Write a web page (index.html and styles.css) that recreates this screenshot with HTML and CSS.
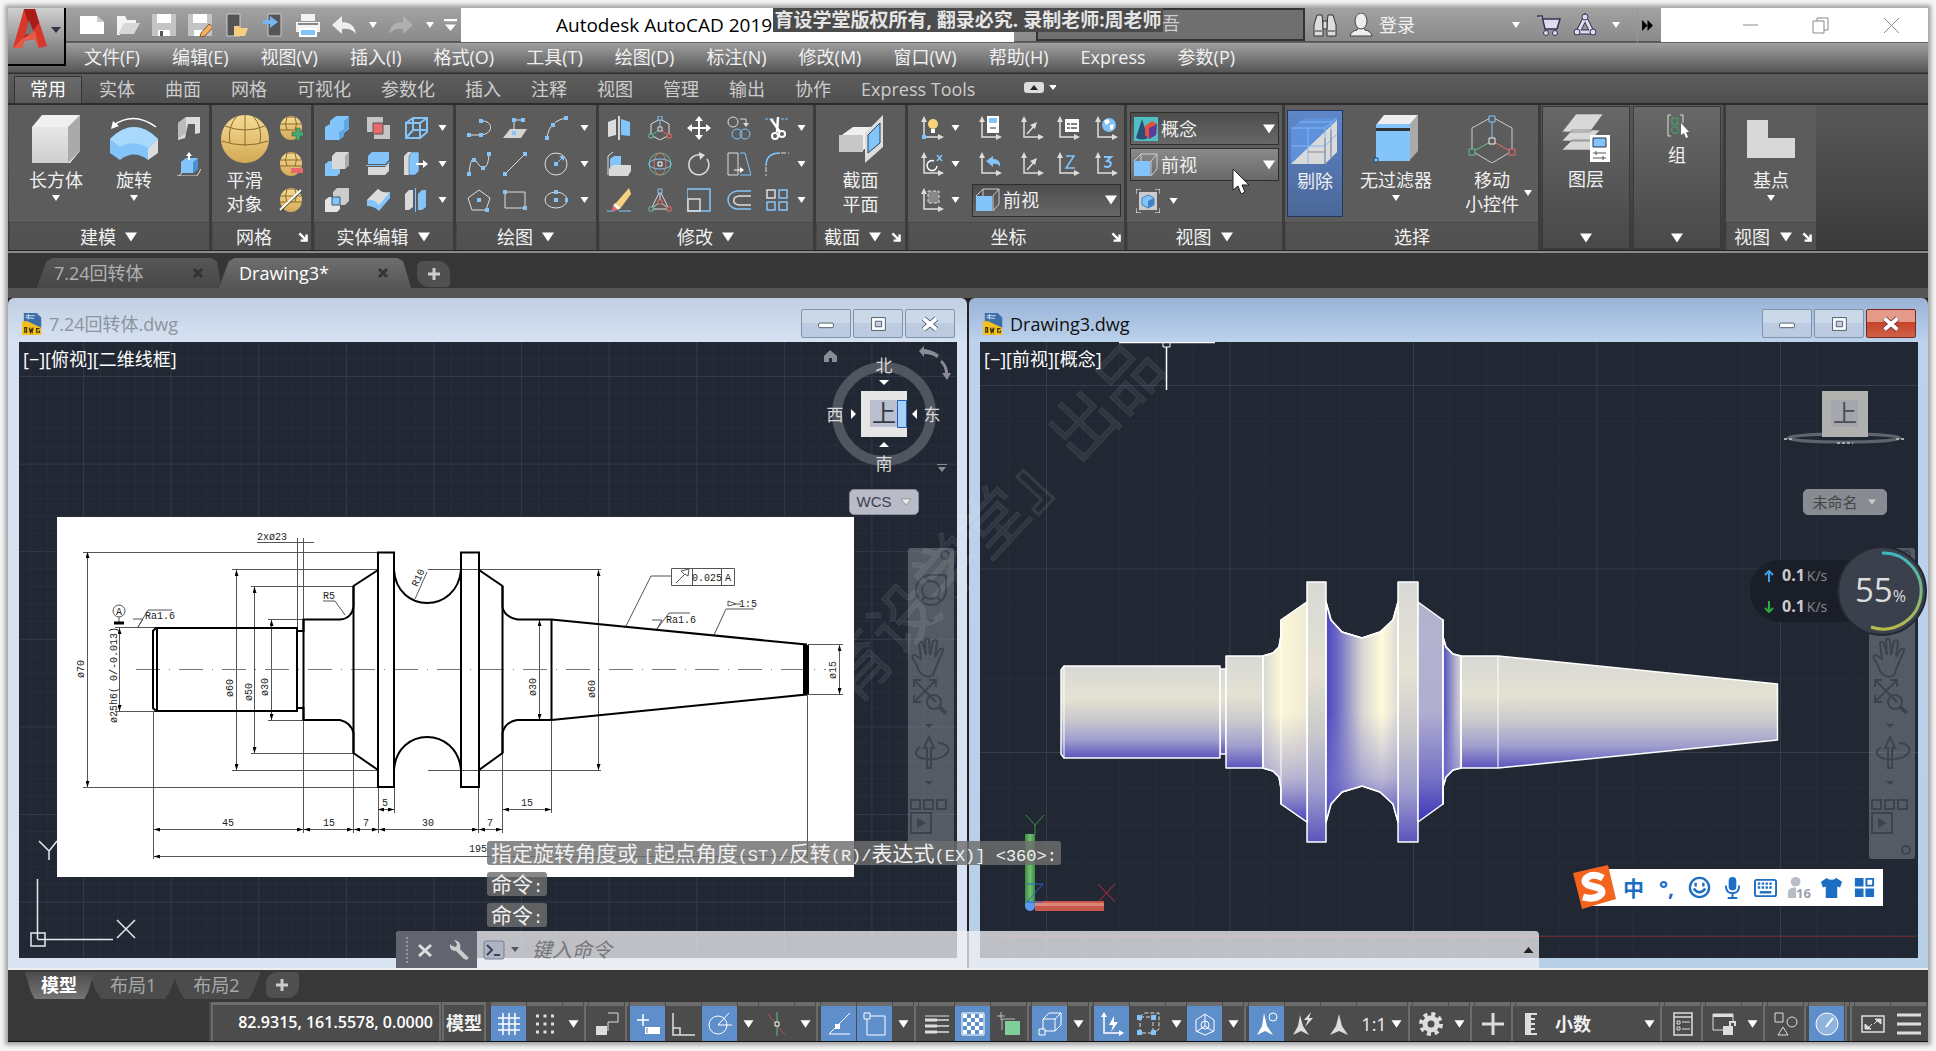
FILE: index.html
```html
<!DOCTYPE html>
<html lang="zh-CN">
<head>
<meta charset="utf-8">
<title>Autodesk AutoCAD 2019</title>
<link rel="stylesheet" href="styles.css">
</head>
<body>
<svg class="sprite" aria-hidden="true">
<defs>
<linearGradient id="gEgg" x1="0" y1="0" x2="0" y2="1"><stop offset="0" stop-color="#f6dc95"/><stop offset="1" stop-color="#d3a956"/></linearGradient>
<linearGradient id="gBox" x1="0" y1="0" x2="0" y2="1"><stop offset="0" stop-color="#e6e6e6"/><stop offset="1" stop-color="#cfcfcf"/></linearGradient>
</defs>
<symbol id="dn" viewBox="0 0 10 8"><path d="M1 1h8L5 7z" fill="#fff"/></symbol>
<symbol id="lnch" viewBox="0 0 10 10"><path d="M2 2l5 5M8 3v5H3" stroke="#fff" stroke-width="2" fill="none"/></symbol>
<symbol id="x" viewBox="0 0 12 12"><path d="M2 2l8 8M10 2l-8 8" stroke="currentColor" stroke-width="3" fill="none"/></symbol>
<symbol id="new" viewBox="0 0 24 24"><path d="M0 3h17l7 6v12H0z" fill="#fff"/><path d="M17 3v6h7" fill="#ccc"/></symbol>
<symbol id="open" viewBox="0 0 24 24"><path d="M1 22V3h8l2 4h9v4H9L4 22z" fill="#f4f4f4"/><path d="M8 10h16l-6 11H2z" fill="#d8d8d8"/></symbol>
<symbol id="save" viewBox="0 0 24 24"><path d="M0 1h24v22H0z" fill="#c4c4c4"/><path d="M5 1h14v9H5zM6 17h12v6H6z" fill="#fff"/><path d="M8 18h3v5H8z" fill="#555"/></symbol>
<symbol id="saveas" viewBox="0 0 24 24"><path d="M0 1h24v22H0z" fill="#c4c4c4"/><path d="M5 1h14v9H5zM6 17h12v6H6z" fill="#fff"/><path d="M13 20l8-9 4 3-8 9-5 1z" fill="#f0b45c" stroke="#8a4a30"/></symbol>
<symbol id="ph1" viewBox="0 0 24 24"><path d="M3 1h13v22H3z" fill="#555" stroke="#ccc"/><path d="M10 13h5l2 2h7l-3 8H10z" fill="#f7cf80"/></symbol>
<symbol id="ph2" viewBox="0 0 24 24"><path d="M8 1h13v22H8z" fill="#555" stroke="#ccc"/><path d="M3 7h7V3l8 6-8 6v-4H3z" fill="#75b7f2"/></symbol>
<symbol id="print" viewBox="0 0 24 24"><path d="M5 1h14v7H5zM0 9h24v10H0z" fill="#f2f2f2"/><path d="M4 16h16v7H4z" fill="#83c5fb" stroke="#fff" stroke-width="2"/><path d="M2 10h20v2H2z" fill="#888"/></symbol>
<symbol id="undo" viewBox="0 0 24 24"><path d="M0 12l10-9v6c8 0 13 4 14 12-3-4-7-6-14-5v5z" fill="currentColor"/></symbol>
<symbol id="redo" viewBox="0 0 24 24"><path d="M24 12L14 3v6C6 9 1 13 0 21c3-4 7-6 14-5v5z" fill="currentColor"/></symbol>
<symbol id="wall" viewBox="0 0 24 24"><path d="M1 7l8-6h14v16l-5 1V8h-7L8 22l-7 2z" fill="#ddd"/><path d="M1 7l8-6v16l-8 6z" fill="#bbb"/></symbol>
<symbol id="pull" viewBox="0 0 24 24"><path d="M0 24h20l4-7M2 24l6-7" stroke="#ddd" fill="none"/><path d="M4 10l5-4h12v11l-5 4H4z" fill="#83c5fb"/><path d="M16 10l5-4v11l-5 4z" fill="#4a90d0"/><path d="M12 8V2" stroke="#fff" stroke-width="2"/><path d="M9 4l3-4 3 4z" fill="#fff"/></symbol>
<symbol id="egg" viewBox="0 0 24 24"><ellipse cx="12" cy="12" rx="11" ry="12" fill="url(#gEgg)"/><path d="M2 8h20M1 14h22M8 1Q5 8 8 14M16 1q3 7 0 13M8 1h8" stroke="#8b6a2a" fill="none"/></symbol>
<symbol id="eggp" viewBox="0 0 24 24"><use href="#egg"/><path d="M17 12h4v4h4v4h-4v4h-4v-4h-4v-4h4z" fill="#3fae6c" stroke="#555" stroke-width=".6"/></symbol>
<symbol id="eggm" viewBox="0 0 24 24"><use href="#egg"/><path d="M12 16h12v5H12z" fill="#e96a6a"/></symbol>
<symbol id="eggs" viewBox="0 0 24 24"><use href="#egg"/><path d="M1 22L22 2" stroke="#fff" stroke-width="2"/><path d="M2 23L23 3" stroke="#444"/></symbol>
<symbol id="uni" viewBox="0 0 24 24"><path d="M0 11l5-3V5l6-5h13v13l-5 4v3l-5 4H0z" fill="#83c5fb"/><path d="M14 24l5-4v-4l5-4V0l-5 5v8l-5 3z" fill="#5da7e6"/></symbol>
<symbol id="sub" viewBox="0 0 24 24"><path d="M0 12l4-3h11v12l-3 3H0z" fill="#83c5fb"/><path d="M7 4l4-4h13v13l-4 4H7z" fill="#d9d9d9"/><path d="M20 4l4-4v13l-4 4z" fill="#aaa"/></symbol>
<symbol id="int" viewBox="0 0 24 24"><path d="M0 12l4-3h11v12l-3 3H0z" fill="#e4e4e4"/><path d="M8 4l4-4h12v13l-4 4H8z" fill="#ccc"/><path d="M7 9h8v8H7z" fill="#83c5fb" stroke="#456"/></symbol>
<symbol id="sects" viewBox="0 0 24 24"><path d="M1 1h16v15H1zM8 9h16v14H8z" fill="#c6c6c6"/><path d="M7 7h10v11H7z" fill="#e96a6a" stroke="#555"/></symbol>
<symbol id="slice" viewBox="0 0 24 24"><path d="M2 4l4-4h17v8l-4 4H2z" fill="#83c5fb"/><path d="M2 15h17l4-4v8l-4 4H2z" fill="#d9d9d9"/><path d="M0 13.500h20l4-4" stroke="#83c5fb" fill="none"/></symbol>
<symbol id="thick" viewBox="0 0 24 24"><path d="M1 12L12 1q5 5 12 3v6L13 23Q8 18 1 18z" fill="#83c5fb"/><path d="M1 12L12 1q5 5 12 3L13 17Q8 11 1 12z" fill="#ddd"/></symbol>
<symbol id="wire" viewBox="0 0 24 24"><path d="M2 7h14v15H2zM2 7l7-5h14l-7 5M23 2v14l-7 6M9 2v12h14M9 14l-7 8" fill="none" stroke="#83c5fb" stroke-width="2"/></symbol>
<symbol id="extr" viewBox="0 0 24 24"><path d="M0 4l4-4h8v19l-4 4H0z" fill="#d9d9d9"/><path d="M5 4l3-4h7v19l-4 4H5z" fill="#83c5fb" stroke="#456" stroke-width=".5"/><path d="M12 12h9" stroke="#fff" stroke-width="2"/><path d="M19 8l5 4-5 4z" fill="#fff"/></symbol>
<symbol id="sep" viewBox="0 0 24 24"><path d="M1 6l4-4h4v17l-4 3H1z" fill="#d9d9d9"/><path d="M14 6l4-4h4v17l-4 3h-4z" fill="#83c5fb"/><path d="M11.500 0v24" stroke="#83c5fb"/></symbol>
<symbol id="mir" viewBox="0 0 24 24"><path d="M1 6l8-3v16l-8 2z" fill="#ddd"/><path d="M14 3l9 3v14l-9-1z" fill="#83c5fb"/><path d="M12 0v24" stroke="#fff" stroke-width="1.500"/></symbol>
<symbol id="pl" viewBox="0 0 24 24"><path d="M2 19h10c15 0 15-14 3-14" fill="none" stroke="#ddd"/><path d="M0 17h4v4H0zM12 17h4v4h-4zM12 3h4v4h-4z" fill="#83c5fb"/></symbol>
<symbol id="pp" viewBox="0 0 24 24"><path d="M0 22l7-9h17l-6 9z" fill="#d4d4d4"/><path d="M11 16V4h8" stroke="#ddd" fill="none"/><path d="M9 15h4v4H9zM9 2h4v4H9zM18 2h4v4h-4z" fill="#83c5fb"/></symbol>
<symbol id="arc" viewBox="0 0 24 24"><path d="M3 22Q5 5 22 2" stroke="#ddd" fill="none" stroke-dasharray="16 2"/><path d="M1 20h4v4H1zM7 7h4v4H7zM20 0h4v4h-4z" fill="#83c5fb"/></symbol>
<symbol id="spl" viewBox="0 0 24 24"><path d="M2 22C4 0 8 8 12 13s9 4 10-10" stroke="#ddd" fill="none"/><path d="M0 20h4v4H0zM5 6h4v4H5zM14 14h4v4h-4zM20 0h4v4h-4z" fill="#83c5fb"/></symbol>
<symbol id="lin" viewBox="0 0 24 24"><path d="M2 22L22 2" stroke="#ddd"/><path d="M0 20h4v4H0zM20 0h4v4h-4z" fill="#83c5fb"/></symbol>
<symbol id="cir" viewBox="0 0 24 24"><circle cx="12" cy="12" r="11" fill="none" stroke="#ddd"/><path d="M12 12l6-6" stroke="#83c5fb"/><path d="M10 10h4v4h-4zM15 4h5v5z" fill="#83c5fb"/></symbol>
<symbol id="pent" viewBox="0 0 24 24"><path d="M12 2l11 8-4 12H5L1 10z" fill="none" stroke="#ddd"/><path d="M10 10h4v4h-4zM18 20h4v4h-4z" fill="#83c5fb"/></symbol>
<symbol id="rect" viewBox="0 0 24 24"><path d="M2 4h20v16H2z" fill="none" stroke="#ddd"/><path d="M0 2h4v4H0zM20 18h4v4h-4z" fill="#83c5fb"/></symbol>
<symbol id="ell" viewBox="0 0 24 24"><ellipse cx="12" cy="12" rx="11" ry="8" fill="none" stroke="#ddd"/><path d="M10 10h4v4h-4zM10 2h4v4h-4zM21 10h4v4h-4z" fill="#83c5fb"/></symbol>
<symbol id="align" viewBox="0 0 24 24"><path d="M1 23V4l5-4" stroke="#ddd" fill="none"/><path d="M3 7l4-3h7v9l-4 3H3z" fill="#83c5fb"/><path d="M2 17l4-4h18v6l-3 5H2z" fill="#d9d9d9"/></symbol>
<symbol id="erase" viewBox="0 0 24 24"><path d="M0 23h7M12 23h12" stroke="#83c5fb"/><path d="M8 16L22 0l2 6L13 21z" fill="#f7cf80"/><path d="M8 15l5 5-2 2-5-4z" fill="#fff"/><path d="M6 17l5 5-4 1-2-2z" fill="#e96a6a"/></symbol>
<symbol id="giz" viewBox="0 0 24 24"><path d="M3 19V8l9-5 9 5v11l-9 5z" fill="none" stroke="#ddd"/><path d="M12 3v10" stroke="#83c5fb"/><path d="M12 13l-9 7" stroke="#5fc08a"/><path d="M12 13l9 7" stroke="#e96a6a"/><path d="M10 0h4v4h-4z" fill="#5c5c5c" stroke="#83c5fb"/><path d="M1 18h4v4H1z" fill="#5c5c5c" stroke="#5fc08a"/><path d="M19 18h4v4h-4z" fill="#5c5c5c" stroke="#e96a6a"/><path d="M10 11h4v4h-4z" fill="#5c5c5c" stroke="#ddd"/></symbol>
<symbol id="rot3" viewBox="0 0 24 24"><circle cx="12" cy="12" r="11" fill="none" stroke="#5fc08a"/><ellipse cx="12" cy="12" rx="6" ry="11" fill="none" stroke="#e96a6a"/><ellipse cx="12" cy="12" rx="11" ry="5" fill="none" stroke="#83c5fb"/><path d="M10 10h4v4h-4z" fill="#5c5c5c" stroke="#fff"/></symbol>
<symbol id="scl3" viewBox="0 0 24 24"><path d="M3 21L12 3l9 18zM12 3v11l-9 7M12 14l9 7" fill="none" stroke="#ddd"/><path d="M10 1h4v4h-4z" fill="#5c5c5c" stroke="#83c5fb"/><path d="M1 19h4v4H1z" fill="#5c5c5c" stroke="#5fc08a"/><path d="M19 19h4v4h-4zM10 12h4v4h-4z" fill="#5c5c5c" stroke="#e96a6a"/></symbol>
<symbol id="move" viewBox="0 0 24 24"><path d="M12 2v20M2 12h20" stroke="#fff" stroke-width="2"/><path d="M12 0l4 5H8zM12 24l-4-5h8zM0 12l5-4v8zM24 12l-5 4V8z" fill="#fff"/></symbol>
<symbol id="rot" viewBox="0 0 24 24"><path d="M14 3A10 10 0 1 0 20 7" fill="none" stroke="#ddd" stroke-width="1.500"/><path d="M12 0l6 3-5 5z" fill="#ddd"/></symbol>
<symbol id="scale" viewBox="0 0 24 24"><path d="M0 23V1h23v22z" fill="none" stroke="#83c5fb" stroke-width="1.500"/><path d="M1 11h12v12H1z" fill="none" stroke="#ddd" stroke-width="1.500"/></symbol>
<symbol id="copy" viewBox="0 0 24 24"><circle cx="6" cy="6" r="5" fill="none" stroke="#ddd"/><circle cx="10" cy="18" r="5" fill="none" stroke="#83c5fb"/><circle cx="18" cy="18" r="5" fill="none" stroke="#83c5fb"/><path d="M13 3h6v6" stroke="#ddd" fill="none"/><path d="M16 7h6l-3 4z" fill="#ddd"/></symbol>
<symbol id="str" viewBox="0 0 24 24"><path d="M1 1h10v22H1z" fill="none" stroke="#ddd"/><path d="M13 1h5l6 22H13" fill="none" stroke="#83c5fb"/><path d="M7 18h9" stroke="#fff"/><path d="M13 15l4 3-4 3z" fill="#fff"/></symbol>
<symbol id="off" viewBox="0 0 24 24"><path d="M24 3H10C-2 5-2 19 10 21h14" fill="none" stroke="#83c5fb" stroke-width="1.500"/><path d="M24 8H12c-7 1-7 8 0 9h12" fill="none" stroke="#ddd" stroke-width="1.500"/></symbol>
<symbol id="trim" viewBox="0 0 24 24"><path d="M0 3h9M16 3h8" stroke="#83c5fb" stroke-dasharray="3 1"/><path d="M6 3l9 13M13 1l-1 15" stroke="#fff" stroke-width="2.500"/><circle cx="10" cy="20" r="3" fill="none" stroke="#fff" stroke-width="2"/><circle cx="17" cy="18" r="3" fill="none" stroke="#fff" stroke-width="2"/></symbol>
<symbol id="fil" viewBox="0 0 24 24"><path d="M1 14C1 5 6 1 15 1" fill="none" stroke="#83c5fb" stroke-width="1.500"/><path d="M1 15v9M16 1h8" stroke="#ddd" stroke-dasharray="5 2"/></symbol>
<symbol id="arr" viewBox="0 0 24 24"><g fill="none" stroke-width="1.500"><path d="M2 2h8v8H2z" stroke="#ddd"/><path d="M14 2h8v8h-8zM2 14h8v8H2zM14 14h8v8h-8z" stroke="#83c5fb"/></g></symbol>
<symbol id="ax" viewBox="0 0 24 24"><path d="M4 4v17h16" fill="none" stroke="#ddd" stroke-width="1.500"/><path d="M1 6l3-6 3 6zM18 18l6 3-6 3z" fill="#ddd"/></symbol>
<symbol id="ax1" viewBox="0 0 24 24"><use href="#ax"/><circle cx="13" cy="8" r="5" fill="#f9d37c"/><path d="M11 13h4v4h-4z" fill="#fff"/><path d="M2 19h4v4H2z" fill="#83c5fb"/></symbol>
<symbol id="ax2" viewBox="0 0 24 24"><use href="#ax"/><path d="M14 9a5 5 0 1 0 3 5" fill="none" stroke="#fff" stroke-width="1.500"/><path d="M17 3l5 6M22 3l-5 6" stroke="#83c5fb" stroke-width="1.500"/></symbol>
<symbol id="ax3" viewBox="0 0 24 24"><use href="#ax"/><path d="M8 3h11v12H8z" fill="#888" stroke="#ddd" stroke-dasharray="3 2"/></symbol>
<symbol id="ax4" viewBox="0 0 24 24"><use href="#ax"/><path d="M9 0h12v17H9z" fill="#fff"/><path d="M11 2h8v5h-8z" fill="#83c5fb"/><path d="M12 12h6" stroke="#333"/></symbol>
<symbol id="ax5" viewBox="0 0 24 24"><use href="#ax"/><path d="M7 18l7-8" stroke="#ddd" stroke-width="1.500"/><path d="M10 9l7-3-2 7z" fill="#ddd"/></symbol>
<symbol id="ax6" viewBox="0 0 24 24"><use href="#ax"/><path d="M9 3h14v13H9z" fill="#fff"/><path d="M11 8h3M15 8h6M11 12h3M15 12h6" stroke="#555" stroke-width="1.500"/></symbol>
<symbol id="ax7" viewBox="0 0 24 24"><use href="#ax"/><circle cx="15" cy="9" r="7" fill="#7fc0f8"/><path d="M10 5l4-2 2 3-4 3zM16 9l4-1-1 5-3 1z" fill="#fff"/></symbol>
<symbol id="ax8" viewBox="0 0 24 24"><use href="#ax"/><path d="M8 9l7-5v3q8 0 7 8-2-4-7-3v3z" fill="#83c5fb"/></symbol>
<symbol id="axz" viewBox="0 0 24 24"><use href="#ax"/><path d="M10 4h8l-8 12h9" stroke="#83c5fb" stroke-width="1.500" fill="none"/></symbol>
<symbol id="ax33" viewBox="0 0 24 24"><use href="#ax"/><path d="M10 5h7l-4 4q6 1 3 5-3 2-6 0" stroke="#83c5fb" stroke-width="2" fill="none"/></symbol>
<symbol id="view" viewBox="0 0 24 24"><path d="M7 1h16v15l-6 7M17 8l6-7M0 8l7-7v7M17 23V8" fill="none" stroke="#ccc"/><path d="M0 8h16v15H0z" fill="#83c5fb"/></symbol>
<symbol id="concept" viewBox="0 0 24 24"><path d="M0 0h24v24H0z" fill="#4fc0c4"/><path d="M8 2l6 19q-6 3-12 0z" fill="#2b4f78"/><path d="M11 9l7-5 5 3-1 11-7 4-4-4z" fill="#e2523c"/><path d="M15 11l8-4-1 11-7 4z" fill="#5b3a9b"/></symbol>
<symbol id="vc" viewBox="0 0 24 24"><path d="M0 5V0h5M19 0h5v5M24 19v5h-5M5 24H0v-5" fill="none" stroke="#fff"/><path d="M3 3h18v18H3z" fill="#ccc"/><path d="M12 6l6 3v7l-6 3-6-3V9z" fill="#83c5fb" stroke="#3d82c4"/><path d="M12 12l6-3v7l-6 3z" fill="#3d82c4"/></symbol>
<symbol id="box" viewBox="0 0 48 48"><path d="M0 12L10 0h38v36L38 48H0z" fill="#f0f0f0"/><path d="M0 12h36v36H0z" fill="url(#gBox)"/><path d="M36 12L48 0v36L36 48z" fill="#aaa"/></symbol>
<symbol id="rev" viewBox="0 0 48 48"><path d="M4 10Q24-4 46 12" fill="none" stroke="#fff" stroke-width="1.500"/><path d="M1 14l2-8 6 5z" fill="#fff"/><path d="M0 24Q24 0 48 24v8L38 45Q24 34 10 45L0 38z" fill="#83c5fb"/><path d="M0 24Q24 0 48 24L38 33Q24 24 10 32z" fill="#a9d8fd"/><path d="M48 24v14l-10 7V34z" fill="#ddd"/></symbol>
<symbol id="bigegg" viewBox="0 0 48 48"><ellipse cx="24" cy="24" rx="24" ry="24" fill="url(#gEgg)"/><path d="M4 11q20 8 40 0M1 26q23 8 46 0M16 1Q6 12 9 28M32 1q10 11 7 27M24 0v31" stroke="#8b6a2a" fill="none"/></symbol>
<symbol id="secp" viewBox="0 0 48 48"><path d="M2 22L16 12h20v15L24 37H2z" fill="#f0f0f0"/><path d="M2 20h24v17H2z" fill="#c8c8c8"/><path d="M28 18L46 0v32L28 48z" fill="#ddd"/><path d="M31 20l12-12v20L31 38z" fill="#83c5fb" stroke="#246"/></symbol>
<symbol id="cull" viewBox="0 0 48 48"><path d="M0 48V12L14 2h32v34L34 48z" fill="#5f90dc"/><path d="M46 4v32L34 48H0z" fill="#dadada"/><path d="M17 12v36M0 30h34M34 12v36M8 6h34M40 8v34M34 30l12-12M0 12h34L46 2" stroke="#7fb8f4" fill="none"/><path d="M34 48V22M17 36h17M40 42V14" stroke="#888"/></symbol>
<symbol id="nof" viewBox="0 0 48 48"><path d="M4 10L12 0h34l-8 10z" fill="#eee"/><path d="M37 10l9-10v36l-9 10z" fill="#aaa"/><path d="M4 9h34v4H4z" fill="#83c5fb"/><path d="M4 13h34v3H4z" fill="#333"/><path d="M4 16h34v30H4z" fill="#83c5fb"/><path d="M2 43h4v4H2z" fill="#83c5fb" stroke="#246"/></symbol>
<symbol id="bgiz" viewBox="0 0 48 48"><path d="M4 36V13L24 2l20 11v23L24 48z" fill="none" stroke="#ccc"/><path d="M24 4v22" stroke="#83c5fb"/><path d="M24 26L4 37" stroke="#5fc08a"/><path d="M24 26l20 11" stroke="#e96a6a"/><g fill="#5c5c5c"><path d="M21 1h6v6h-6z" stroke="#83c5fb"/><path d="M21 23h6v6h-6z" stroke="#eee"/><path d="M1 34h6v6H1z" stroke="#5fc08a"/><path d="M41 34h6v6h-6z" stroke="#e96a6a"/></g></symbol>
<symbol id="layer" viewBox="0 0 48 48"><path d="M0 54l0-18 10-10h28L28 36H0zM0 27l10-11h28L28 27zM0 18L14 0h27L28 18z" fill="none"/><path d="M0 36l10-10h28L28 36zM0 27l10-11h28L28 27zM0 18L14 0h27L28 18z" fill="#d8d8d8" stroke="#666" stroke-width=".6"/><path d="M28 21h20v27H28z" fill="#fff"/><path d="M31 24h13v9H31z" fill="#83c5fb" stroke="#234"/><path d="M31 39h13M31 44h13M34 37v4M41 42v4" stroke="#555"/></symbol>
<symbol id="grp" viewBox="0 0 24 24"><path d="M6 1H3v21h3M15 1h3v8" fill="none" stroke="#ddd"/><path d="M7 4h6v6H7z" fill="none" stroke="#3fae6c"/><circle cx="10" cy="16" r="3.500" fill="none" stroke="#3fae6c"/><path d="M16 9v12l3-2 2 5 2-1-2-5h3z" fill="#fff"/></symbol>
<symbol id="base" viewBox="0 0 48 48"><path d="M0 5h21v18h27v20H0z" fill="#d8d8d8"/></symbol>
<symbol id="dwg" viewBox="0 0 24 24"><path d="M2 0h14l5 5v12H2z" fill="#3d6ea8"/><path d="M4 3h10M7 1v6M4 5l9 1" stroke="#cfe4f8"/><path d="M0 9h6l15 7v8H0z" fill="#f2c020"/><path d="M3 16v5h2v-5zM8 16l1 5 1-3 1 3 1-5M19 17h-3v4h3v-2" stroke="#3a3000" stroke-width="1.300" fill="none"/></symbol>
</svg>

<div class="app">
<header class="top">
  <button class="logo" aria-label="应用程序菜单"><svg width="36" height="44" viewBox="0 0 36 44"><path d="M1 40L12 1h11l12 37-8 2-4-9-11 2-2 7z" fill="#d8382c"/><path d="M12 1h11l4 14-13 16-2-1 5-13z" fill="#a81c1a"/><path d="M17 12l5 13-9 2z" fill="#777"/><path d="M1 40l9-9 13-8 4 17-4-9-11 2-2 7z" fill="#e65a48"/></svg><svg class="dn" viewBox="0 0 10 8"><path d="M0 1h10L5 7z" fill="#334"/></svg></button>
  <div class="toprows">
  <div class="titlebar">
    <div class="qat">
      <button aria-label="新建"><svg><use href="#new"/></svg></button><button aria-label="打开"><svg><use href="#open"/></svg></button><button aria-label="保存"><svg><use href="#save"/></svg></button><button aria-label="另存为"><svg><use href="#saveas"/></svg></button><button aria-label="从移动设备打开"><svg><use href="#ph1"/></svg></button><button aria-label="保存到移动设备"><svg><use href="#ph2"/></svg></button><button aria-label="打印"><svg><use href="#print"/></svg></button><button aria-label="放弃"><svg><use href="#undo"/></svg></button><button class="nar" aria-label="放弃列表"><svg class="dn"><use href="#dn"/></svg></button><button class="dim-btn" aria-label="重做"><svg><use href="#redo"/></svg></button><button class="nar" aria-label="重做列表"><svg class="dn"><use href="#dn"/></svg></button><button class="nar" aria-label="自定义"><svg class="cust" viewBox="0 0 12 12"><path d="M0 0h12v2H0zM1 5h10l-5 6z" fill="#fff"/></svg></button>
    </div>
    <h1 class="title">Autodesk AutoCAD 2019<span class="notice">育设学堂版权所有, 翻录必究. 录制老师:周老师</span></h1>
    <input class="search" aria-label="键入关键字或短语" placeholder="吾">
    <div class="account">
      <button aria-label="搜索"><svg class="i" viewBox="0 0 24 24"><g fill="#ddd" stroke="#333"><path d="M4 2h5l1 9v12H1V12zM15 2h5l3 10v11h-9V11z"/><path d="M10 8h4v8h-4z"/></g><path d="M2 18h7M15 18h7" stroke="#333"/></svg></button>
      <button class="login"><svg class="i" viewBox="0 0 24 24"><g fill="#eee" stroke="#444"><path d="M1 23q1-5 7-6l2-2h4l2 2q6 1 7 6z"/><ellipse cx="12" cy="8" rx="6" ry="8"/></g></svg>登录</button>
      <button class="nar" aria-label="登录选项"><svg class="dn"><use href="#dn"/></svg></button>
      <button aria-label="商店"><svg class="i" viewBox="0 0 24 24"><path d="M0 3h5l3 13h12l3-10H6" fill="#dde" stroke="#335" stroke-width="1.500"/><circle cx="9" cy="20" r="2.500" fill="#dde" stroke="#335"/><circle cx="18" cy="20" r="2.500" fill="#dde" stroke="#335"/></svg></button>
      <button aria-label="应用"><svg class="i" viewBox="0 0 24 24"><path d="M12 5l7 14H5z" fill="none" stroke="#335" stroke-width="5"/><path d="M12 5l7 14H5z" fill="none" stroke="#dde" stroke-width="3"/><g fill="#dde" stroke="#335"><circle cx="12" cy="4" r="3"/><circle cx="4" cy="19" r="3"/><circle cx="20" cy="19" r="3"/></g></svg></button>
      <button class="nar" aria-label="应用列表"><svg class="dn"><use href="#dn"/></svg></button>
      <button class="more" aria-label="更多"><svg class="cust" viewBox="0 0 12 12"><path d="M1 1l5 5-5 5zM6 1l5 5-5 5z" fill="#000"/></svg></button>
    </div>
    <div class="winbtns">
      <button aria-label="最小化"><svg class="i" viewBox="0 0 24 24"><path d="M5 12h15" stroke="#888"/></svg></button><button aria-label="还原"><svg class="i" viewBox="0 0 24 24"><path d="M4 8h11v12H4zM8 8V5h11v12h-4" fill="none" stroke="#888"/></svg></button><button aria-label="关闭"><svg class="i" viewBox="0 0 24 24"><path d="M4 5l15 15M19 5L4 20" stroke="#888"/></svg></button>
    </div>
  </div>
  <nav class="menu"><a href="#">文件(F)</a><a href="#">编辑(E)</a><a href="#">视图(V)</a><a href="#">插入(I)</a><a href="#">格式(O)</a><a href="#">工具(T)</a><a href="#">绘图(D)</a><a href="#">标注(N)</a><a href="#">修改(M)</a><a href="#">窗口(W)</a><a href="#">帮助(H)</a><a href="#">Express</a><a href="#">参数(P)</a></nav>
  </div>
</header>

<nav class="tabs"><a class="on" href="#">常用</a><a href="#">实体</a><a href="#">曲面</a><a href="#">网格</a><a href="#">可视化</a><a href="#">参数化</a><a href="#">插入</a><a href="#">注释</a><a href="#">视图</a><a href="#">管理</a><a href="#">输出</a><a href="#">协作</a><a href="#">Express Tools</a><button aria-label="最小化功能区"><svg width="32" height="12" viewBox="0 0 32 12"><rect width="20" height="11" rx="3" fill="#ddd"/><path d="M6 8l4-5 4 5z" fill="#222"/><path d="M25 3h8l-4 5z" fill="#fff"/></svg></button></nav>

<section class="ribbon">
  <div class="panel p1"><div class="body">
    <button class="big"><svg><use href="#box"/></svg><span>长方体</span><svg class="dn"><use href="#dn"/></svg></button>
    <button class="big"><svg><use href="#rev"/></svg><span>旋转</span><svg class="dn"><use href="#dn"/></svg></button>
    <div class="grid"><button aria-label="多段体"><svg><use href="#wall"/></svg></button><button aria-label="按住并拖动"><svg><use href="#pull"/></svg></button></div>
  </div><footer><span>建模</span><svg class="ft"><use href="#dn"/></svg></footer></div>
  <div class="panel p2"><div class="body">
    <button class="big"><svg><use href="#bigegg"/></svg><span>平滑<br>对象</span></button>
    <div class="grid"><button aria-label="提高平滑度"><svg><use href="#eggp"/></svg></button><button aria-label="降低平滑度"><svg><use href="#eggm"/></svg></button><button aria-label="优化网格"><svg><use href="#eggs"/></svg></button></div>
  </div><footer><span>网格</span><svg class="ln"><use href="#lnch"/></svg></footer></div>
  <div class="panel p3"><div class="body"><div class="grid">
    <button aria-label="并集"><svg><use href="#uni"/></svg></button><button aria-label="干涉"><svg><use href="#sects"/></svg></button><button aria-label="提取边"><svg><use href="#wire"/></svg></button><button class="d" aria-label="更多边工具"><svg><use href="#dn"/></svg></button>
    <button aria-label="差集"><svg><use href="#sub"/></svg></button><button aria-label="剖切"><svg><use href="#slice"/></svg></button><button aria-label="拉伸面"><svg><use href="#extr"/></svg></button><button class="d" aria-label="更多面工具"><svg><use href="#dn"/></svg></button>
    <button aria-label="交集"><svg><use href="#int"/></svg></button><button aria-label="加厚"><svg><use href="#thick"/></svg></button><button aria-label="分割"><svg><use href="#sep"/></svg></button><button class="d" aria-label="更多体工具"><svg><use href="#dn"/></svg></button>
  </div></div><footer><span>实体编辑</span><svg class="ft"><use href="#dn"/></svg></footer></div>
  <div class="panel p4"><div class="body"><div class="grid">
    <button aria-label="多段线"><svg><use href="#pl"/></svg></button><button aria-label="平面"><svg><use href="#pp"/></svg></button><button aria-label="圆弧"><svg><use href="#arc"/></svg></button><button class="d" aria-label="更多圆弧"><svg><use href="#dn"/></svg></button>
    <button aria-label="样条曲线"><svg><use href="#spl"/></svg></button><button aria-label="直线"><svg><use href="#lin"/></svg></button><button aria-label="圆"><svg><use href="#cir"/></svg></button><button class="d" aria-label="更多圆"><svg><use href="#dn"/></svg></button>
    <button aria-label="多边形"><svg><use href="#pent"/></svg></button><button aria-label="矩形"><svg><use href="#rect"/></svg></button><button aria-label="椭圆"><svg><use href="#ell"/></svg></button><button class="d" aria-label="更多椭圆"><svg><use href="#dn"/></svg></button>
  </div></div><footer><span>绘图</span><svg class="ft"><use href="#dn"/></svg></footer></div>
  <div class="panel p5"><div class="body"><div class="grid">
    <button aria-label="三维镜像"><svg><use href="#mir"/></svg></button><button aria-label="三维移动"><svg><use href="#giz"/></svg></button><button aria-label="移动"><svg><use href="#move"/></svg></button><button aria-label="复制"><svg><use href="#copy"/></svg></button><button aria-label="修剪"><svg><use href="#trim"/></svg></button><button class="d" aria-label="更多修剪"><svg><use href="#dn"/></svg></button>
    <button aria-label="三维对齐"><svg><use href="#align"/></svg></button><button aria-label="三维旋转"><svg><use href="#rot3"/></svg></button><button aria-label="旋转"><svg><use href="#rot"/></svg></button><button aria-label="拉伸"><svg><use href="#str"/></svg></button><button aria-label="圆角"><svg><use href="#fil"/></svg></button><button class="d" aria-label="更多圆角"><svg><use href="#dn"/></svg></button>
    <button aria-label="删除"><svg><use href="#erase"/></svg></button><button aria-label="三维缩放"><svg><use href="#scl3"/></svg></button><button aria-label="缩放"><svg><use href="#scale"/></svg></button><button aria-label="偏移"><svg><use href="#off"/></svg></button><button aria-label="阵列"><svg><use href="#arr"/></svg></button><button class="d" aria-label="更多阵列"><svg><use href="#dn"/></svg></button>
  </div></div><footer><span>修改</span><svg class="ft"><use href="#dn"/></svg></footer></div>
  <div class="panel p6"><div class="body">
    <button class="big"><svg><use href="#secp"/></svg><span>截面<br>平面</span></button>
  </div><footer><span>截面</span><svg class="ft"><use href="#dn"/></svg><svg class="ln"><use href="#lnch"/></svg></footer></div>
  <div class="panel p7"><div class="body"><div class="grid">
    <button aria-label="UCS 图标"><svg><use href="#ax1"/></svg></button><button class="d" aria-label="UCS 图标选项"><svg><use href="#dn"/></svg></button><button aria-label="UCS"><svg><use href="#ax4"/></svg></button><button aria-label="世界"><svg><use href="#ax5"/></svg></button><button aria-label="命名 UCS"><svg><use href="#ax6"/></svg></button><button aria-label="UCS 世界"><svg><use href="#ax7"/></svg></button>
    <button aria-label="X 旋转"><svg><use href="#ax2"/></svg></button><button class="d" aria-label="旋转选项"><svg><use href="#dn"/></svg></button><button aria-label="上一个 UCS"><svg><use href="#ax8"/></svg></button><button aria-label="原点"><svg><use href="#ax5"/></svg></button><button aria-label="Z 轴矢量"><svg><use href="#axz"/></svg></button><button aria-label="三点"><svg><use href="#ax33"/></svg></button>
    <button aria-label="视图 UCS"><svg><use href="#ax3"/></svg></button><button class="d" aria-label="视图 UCS 选项"><svg><use href="#dn"/></svg></button><label class="combo"><svg><use href="#view"/></svg><select aria-label="UCS 名称"><option>前视</option></select><svg class="ft"><use href="#dn"/></svg></label>
  </div></div><footer><span>坐标</span><svg class="ln"><use href="#lnch"/></svg></footer></div>
  <div class="panel p8"><div class="body col">
    <label class="combo"><svg><use href="#concept"/></svg><select aria-label="视觉样式"><option>概念</option></select><svg class="ft"><use href="#dn"/></svg></label>
    <label class="combo hot"><svg><use href="#view"/></svg><select aria-label="视图"><option>前视</option></select><svg class="ft"><use href="#dn"/></svg><svg class="cursor" viewBox="0 0 18 27"><path d="M1 1v21l5-4 3 8 4-2-3-7h7z" fill="#fff" stroke="#222"/></svg></label>
    <div class="grid"><button aria-label="视口"><svg><use href="#vc"/></svg></button><button class="d" aria-label="视口选项"><svg><use href="#dn"/></svg></button></div>
  </div><footer><span>视图</span><svg class="ft"><use href="#dn"/></svg></footer></div>
  <div class="panel p9"><div class="body">
    <button class="big on"><svg><use href="#cull"/></svg><span>剔除</span></button>
    <button class="big"><svg><use href="#nof"/></svg><span>无过滤器</span><svg class="dn"><use href="#dn"/></svg></button>
    <button class="big side"><svg><use href="#bgiz"/></svg><span>移动<br>小控件</span><svg class="dn"><use href="#dn"/></svg></button>
  </div><footer><span>选择</span></footer></div>
  <button class="panel fold"><svg><use href="#layer"/></svg><span>图层</span><svg class="ft"><use href="#dn"/></svg></button>
  <button class="panel fold small"><svg><use href="#grp"/></svg><span>组</span><svg class="ft"><use href="#dn"/></svg></button>
  <div class="panel p10"><div class="body">
    <button class="big"><svg><use href="#base"/></svg><span>基点</span><svg class="dn"><use href="#dn"/></svg></button>
  </div><footer><span>视图</span><svg class="ft"><use href="#dn"/></svg><svg class="ln"><use href="#lnch"/></svg></footer></div>
</section>

<nav class="files"><a href="#">7.24回转体<svg><use href="#x"/></svg></a><a class="on" href="#">Drawing3*<svg><use href="#x"/></svg></a><button aria-label="新图形"><svg viewBox="0 0 12 12"><path d="M6 0v12M0 6h12" stroke="#ccc" stroke-width="3"/></svg></button></nav>

<main class="docs">
  <section class="doc">
    <header><svg><use href="#dwg"/></svg><h2>7.24回转体.dwg</h2>
      <button aria-label="最小化"><svg viewBox="0 0 24 24"><rect x="4" y="11" width="16" height="5" rx="1" fill="#fff" stroke="#456"/></svg></button><button aria-label="最大化"><svg viewBox="0 0 24 24"><path d="M5 5h15v14H5zM9 9v6h7V9z" fill="#fff" fill-rule="evenodd" stroke="#456"/></svg></button><button aria-label="关闭"><svg viewBox="0 0 24 24"><path d="M5 6l14 12M19 6L5 18" stroke="#456" stroke-width="6"/><path d="M5 6l14 12M19 6L5 18" stroke="#fff" stroke-width="4"/></svg></button>
    </header>
    <div class="canvas">
      <svg class="draw" viewBox="19 343 938 616" preserveAspectRatio="xMinYMin meet">
        <defs>
          <pattern id="g1" x="83" y="377" width="87.600" height="87.600" patternUnits="userSpaceOnUse"><path d="M17.500 0v88M35 0v88M52.500 0v88M70 0v88M0 17.500h88M0 35h88M0 52.500h88M0 70h88" stroke="#272e3b"/><path d="M.5 0v88M0 .5h88" stroke="#323a49"/></pattern>
          <marker id="ar" viewBox="0 0 6 4" refX="6" refY="2" markerWidth="6" markerHeight="4" markerUnits="userSpaceOnUse" orient="auto-start-reverse"><path d="M0 0l6 2-6 2z"/></marker>
        </defs>
        <path d="M19 343h938v616H19z" fill="url(#g1)"/>
        <path d="M57 518h797v360H57z" fill="#fff"/>
        <g stroke="#555" fill="none">
          <path d="M83 553.500h295M83 788.500h295M232 570.500h145M232 771.500h145M251 587.500h102M251 754.500h102M268 620.500h36M268 721.500h36M115 628.500h42M115 712.500h42M257 543.500h57M297.500 539v93M303.500 539v82M428 570.500h173M428 771.500h173M808 645.500h35M808 695.500h35M153.500 712v148M303.500 721v113M353.500 754v80M378.500 788v46M394.500 788v26M478.500 788v46M502.500 754v80M551.500 721v93M807.500 695v165"/>
          <g marker-start="url(#ar)" marker-end="url(#ar)"><path d="M87.500 553v235"/><path d="M119.500 629v83"/><path d="M236.500 571v200"/><path d="M254.500 588v166"/><path d="M271.500 621v100"/><path d="M539.500 621v100"/><path d="M598.500 571v200"/><path d="M839.500 646v49"/><path d="M154 830.500h149"/><path d="M304 830.500h49"/><path d="M354 830.500h24"/><path d="M379 830.500h99"/><path d="M479 830.500h23"/><path d="M378 810.500h16"/><path d="M503 810.500h48"/><path d="M154 857.500h653"/></g>
          <path d="M136 670.500h690" stroke="#777" stroke-dasharray="24 9 1 9"/>
          <path d="M323 602h12l10 14M427 573l-12 27M671 577h-20l-25 50M754 610h-28l-12 26M671.500 569.500h63v17h-63zM692.500 569v17M721.500 569v17M676 584l9-9 3 2 1-7-8 2 3 3M652 621h10l-5 9 12-16h21M133 620h10l-5 8 10-17h24M728 602l8 3-8 2zM736 605h5"/>
          <circle cx="119" cy="612" r="6"/><path d="M119 618v6"/><path d="M114 624h10" stroke="#000" stroke-width="3"/>
        </g>
        <g fill="none" stroke="#000" stroke-width="2">
          <path d="M156 629h141v3h6.500v-11.500H340q12-1 13.500-13V587l24.500-16v-17.500h16V571c3 44 63 44 67 0v-17.500h18V571l23.500 16v21q2 10 15 12.500h34L806 645.500v50L551.500 721H517q-12 2-14.500 13v20L479 771v17h-18v-17c-4-44-64-44-67 0v17h-16v-17l-24.500-17v-20q-2-10-13.500-13h-36.500v-12H297v3H156l-3-3v-77z"/>
          <path d="M157 629v83M297 629v83M303.500 621v100M353.500 587v167M378 554v234M394 554v234M461 554v234M479 554v234M502.500 587v167M551.500 621v100"/>
          <path d="M806 646v49" stroke-width="6"/>
        </g>
        <g class="dim" text-anchor="middle">
          <text x="272" y="541">2xø23</text><text x="329" y="600">R5</text><text x="119" y="616">A</text><text x="160" y="620">Ra1.6</text><text x="681" y="624">Ra1.6</text><text x="748" y="608">1:5</text><text x="707" y="582">0.025</text><text x="728" y="582">A</text>
          <text x="228" y="827">45</text><text x="329" y="827">15</text><text x="366" y="827">7</text><text x="428" y="827">30</text><text x="490" y="827">7</text><text x="385" y="807">5</text><text x="527" y="807">15</text><text x="478" y="853">195</text>
          <text transform="translate(84 670) rotate(-90)">ø70</text><text transform="translate(117 676) rotate(-90)">ø25h6( 0/-0.013)</text><text transform="translate(233 689) rotate(-90)">ø60</text><text transform="translate(252 693) rotate(-90)">ø50</text><text transform="translate(268 688) rotate(-90)">ø30</text><text transform="translate(536 688) rotate(-90)">ø30</text><text transform="translate(595 690) rotate(-90)">ø60</text><text transform="translate(836 671) rotate(-90)">ø15</text><text transform="translate(421 580) rotate(-65)">R10</text>
        </g>
        <g fill="none" stroke="#e8e8f0" stroke-width="1.500"><path d="M31 934h14v13H31zM37.500 940V880M37.500 940.500H113M117 921l18 18M135 921l-18 18M39 842l10 10M57 842l-8 10v9"/></g>
      </svg>
      <button class="vplabel">[−][俯视][二维线框]</button>
      <svg class="cube" viewBox="820 343 137 136">
        <circle cx="884" cy="415" r="47" fill="none" stroke="#50555f" stroke-width="10"/>
        <path d="M861 392h46v46h-46z" fill="#e6e6e6"/><path d="M870 401h27v27h-27z" fill="#b9bfcd"/><path d="M897.500 401.500h9v27h-9z" fill="#a6d0f8" stroke="#1d62b8"/>
        <text x="884" y="423" font-size="24" fill="#333a48">上</text>
        <g font-size="17" fill="#d8d8d8"><text x="884" y="373">北</text><text x="884" y="471">南</text><text x="835" y="422">西</text><text x="932" y="422">东</text></g>
        <path d="M879 381h10l-5 5zM879 448h10l-5-5zM851 410v10l5-5zM917 410v10l-5-5z" fill="#fff"/>
        <path d="M824 357l6-6 7 6v6h-5v-4h-3v4h-5zM919 352l5-5v3q9 1 15 6l-2 3q-5-4-13-4v3zM942 361q6 6 6 13h3l-4 7-5-7h3q0-6-5-11zM937 465h10v1h-10zM938 468h8l-4 5z" fill="#878c96"/>
      </svg>
      <button class="ucs">WCS<svg viewBox="0 0 12 8"><path d="M1 1h10L6 7z" fill="#eee" stroke="#999"/></svg></button>
      <svg class="nav" viewBox="908 549 46 311"><g id="navg"><rect x="908" y="549" width="46" height="311" rx="3" fill="#8a9098" fill-opacity=".5"/><g fill="none" stroke="#3d434e" stroke-width="2"><circle cx="945" cy="556" r="4"/><circle cx="931" cy="591" r="9"/><path d="M916 591a15 15 0 0 1 15-15h12q3 0 3 3v12a15 15 0 0 1-30 0M921 602l4-4M941 602l-4-4"/><path d="M919 672q-2-7-6-12-2-4 2-4l6 4-2-16q3-3 4 1l3 11-1-15q3-3 4 0l1 15 3-14q4-2 4 1l-2 15 5-8q4-1 3 2l-7 16-3 8q-7 5-14-4z"/><path d="M914 681l22 22M936 681l-22 22M914 688v-7h7M929 681h7v7M914 696v7h7"/><circle cx="934" cy="703" r="7"/><path d="M939 708l7 6" stroke-width="4"/><path d="M927 769v-20h-3l5-11 5 11h-3v20zM920 748c-16 12 20 18 28 5 2-6-4-9-10-9M911 801h9v9h-9zM924 801h9v9h-9zM937 801h9v9h-9zM911 814h20v20h-20z"/><circle cx="945" cy="851" r="4"/></g><path d="M927 620h8l-4 4zM925 725h8l-4 4zM925 782h8l-4 4zM917 819l9 5-9 5z" fill="#3d434e"/></g></svg>
    </div>
  </section>
  <section class="doc active">
    <header><svg><use href="#dwg"/></svg><h2>Drawing3.dwg</h2>
      <button aria-label="最小化"><svg viewBox="0 0 24 24"><rect x="4" y="11" width="16" height="5" rx="1" fill="#fff" stroke="#456"/></svg></button><button aria-label="最大化"><svg viewBox="0 0 24 24"><path d="M5 5h15v14H5zM9 9v6h7V9z" fill="#fff" fill-rule="evenodd" stroke="#456"/></svg></button><button class="close" aria-label="关闭"><svg viewBox="0 0 24 24"><path d="M5 6l14 12M19 6L5 18" stroke="#634" stroke-width="6"/><path d="M5 6l14 12M19 6L5 18" stroke="#fff" stroke-width="4"/></svg></button>
    </header>
    <div class="canvas">
      <svg class="draw" viewBox="979 343 938 616" preserveAspectRatio="xMinYMin meet">
        <defs>
          <pattern id="g2" x="1045" y="386" width="183.500" height="183.500" patternUnits="userSpaceOnUse"><path d="M36.500 0v184M73.500 0v184M110.500 0v184M146.500 0v184M0 36.500h184M0 73.500h184M0 110.500h184M0 146.500h184" stroke="#262c38"/><path d="M.5 0v184M0 .5h184" stroke="#353c4a"/></pattern>
          <linearGradient id="v" x1="0" y1="0" x2="0" y2="1"><stop offset="0" stop-color="#d8d8d6"/><stop offset=".35" stop-color="#e4e2d2"/><stop offset=".58" stop-color="#cac9cc"/><stop offset=".8" stop-color="#a09fce"/><stop offset="1" stop-color="#5c54bc"/></linearGradient>
          <linearGradient id="hl" x1="0" y1="0" x2="1" y2="0"><stop offset="0" stop-color="#d8d8d4"/><stop offset=".4" stop-color="#fbf7d6"/><stop offset="1" stop-color="#f0ecd4"/></linearGradient>
          <linearGradient id="hg" x1="0" y1="0" x2="1" y2="0"><stop offset="0" stop-color="#4a46c0"/><stop offset=".15" stop-color="#6a66c4"/><stop offset=".5" stop-color="#d8d6d2"/><stop offset=".78" stop-color="#fffbdc"/><stop offset="1" stop-color="#dcdad4"/></linearGradient>
          <linearGradient id="hr" x1="0" y1="0" x2="1" y2="0"><stop offset="0" stop-color="#4e4ac0"/><stop offset=".6" stop-color="#a8a6cc"/><stop offset="1" stop-color="#d8d6d4"/></linearGradient>
          <linearGradient id="vb" x1="0" y1="0" x2="0" y2="1"><stop offset=".5" stop-color="#8a86d0" stop-opacity="0"/><stop offset=".8" stop-color="#7a76cc" stop-opacity=".5"/><stop offset="1" stop-color="#4a42bc"/></linearGradient>
          <linearGradient id="vc2" x1="0" y1="0" x2="0" y2="1"><stop offset="0" stop-color="#b4b3ce"/><stop offset=".5" stop-color="#b0aed0"/><stop offset=".8" stop-color="#7672c6"/><stop offset="1" stop-color="#3a36b8"/></linearGradient>
          <linearGradient id="gr" x1="0" y1="0" x2="1" y2="0"><stop offset="0" stop-color="#3f8a45"/><stop offset=".5" stop-color="#6fc070"/><stop offset="1" stop-color="#3f8a45"/></linearGradient>
        </defs>
        <path d="M979 343h938v616H979z" fill="url(#g2)"/>
        <path d="M1000 937.500h914" stroke="#6a2830"/>
        <g stroke="#fff" stroke-width="1.500" stroke-linejoin="round">
          <g fill="url(#v)"><path d="M1219 670h6v85h-6z"/><path d="M1060 671l3-4h156v92h-156l-3-4z"/><path d="M1225 657h37v112h-37z"/><path d="M1306 583h19v260h-19z"/><path d="M1397 583h20v260h-20z"/><path d="M1460 657h37l279.500 28v56L1497 769h-37z"/></g>
          <path d="M1262 657l10-3 6-6 2-12v-15l26-18v220l-26-18v-15l-2-12-6-6-10-3z" fill="url(#hl)"/><path d="M1262 657l10-3 6-6 2-12v-15l26-18v220l-26-18v-15l-2-12-6-6-10-3z" fill="url(#vb)"/>
          <path d="M1325 603l5 18 11 12 20 6 18-6 13-12 5-18v220l-5-18-13-12-18-6-20 6-11 12-5 18z" fill="url(#hg)"/><path d="M1325 603l5 18 11 12 20 6 18-6 13-12 5-18v220l-5-18-13-12-18-6-20 6-11 12-5 18z" fill="url(#vb)"/>
          <path d="M1417 603l25 18v184l-25 18z" fill="url(#vc2)"/>
          <path d="M1442 621v17l3 10 7 7 8 2v112l-8 2-7 7-3 10v17z" fill="url(#hr)"/><path d="M1442 621v17l3 10 7 7 8 2v112l-8 2-7 7-3 10v17z" fill="url(#vb)"/>
          <path d="M1063 667v92M1280 621v184M1497 657v112" fill="none" stroke-width="1"/>
        </g>
        <path d="M1024 835h10v72h-10z" fill="url(#gr)"/><path d="M1034 902h69v10h-69z" fill="#c8584e"/><path d="M1034 904h69v3h-69z" fill="#e08478"/><circle cx="1029" cy="907" r="5" fill="#5a9cf0"/>
        <path d="M1025 816l9 10 9-10M1034 826v10" fill="none" stroke="#3a9440"/><path d="M1097 885l17 18M1114 885l-17 18" stroke="#b83038"/><path d="M1026 885h16l-16 18h16" fill="none" stroke="#2a62d0"/>
        <path d="M1118 343.500h96M1165.500 348v43" stroke="#fff" stroke-width="1.500"/><path d="M1162 341h7v7h-7z" fill="none" stroke="#fff"/>
      </svg>
      <button class="vplabel">[−][前视][概念]</button>
      <svg class="cube" viewBox="1780 343 137 136">
        <ellipse cx="1843" cy="439" rx="56" ry="4" fill="none" stroke="#5f646d" stroke-width="3"/><path d="M1783 440h8M1895 440h8M1836 444h16" stroke="#aaa" stroke-width="2" stroke-dasharray="3 2"/>
        <path d="M1821 392h46v46h-46z" fill="#b0b0ae"/><path d="M1830 401h27v27h-27z" fill="#a4a8ac"/><text x="1844" y="423" font-size="24" fill="#4a4f58">上</text>
      </svg>
      <button class="ucs second">未命名<svg viewBox="0 0 12 8"><path d="M1 1h10L6 7z" fill="#ccc" stroke="#888"/></svg></button>
      <svg class="nav" viewBox="908 549 46 311"><use href="#navg"/></svg>
    </div>
  </section>

  <svg class="wm" viewBox="0 0 400 400" aria-hidden="true"><text transform="translate(32 424) rotate(-47)">育设学堂』出品</text></svg>

  <div class="history"><p>指定旋转角度或 <kbd>[</kbd>起点角度<kbd>(ST)/</kbd>反转<kbd>(R)/</kbd>表达式<kbd>(EX)] &lt;360&gt;:</kbd></p><p>命令<kbd>:</kbd></p><p>命令<kbd>:</kbd></p></div>
  <div class="cmd">
    <div class="grip"><i></i><button aria-label="关闭"><svg viewBox="0 0 14 14"><path d="M1 2l12 11M13 2L1 13" stroke="#ddd" stroke-width="3"/></svg></button><button aria-label="自定义"><svg viewBox="0 0 20 20"><path d="M4 0l3 4-1 3-4-1-2-2q-1 7 6 7l8 8q3 2 5-1l-9-9Q12 1 4 0z" fill="#ccc"/></svg></button></div>
    <button class="prompt" aria-label="最近使用的命令"><svg viewBox="0 0 22 20"><rect x="1" y="1" width="20" height="18" rx="2" fill="#aeb4c2" stroke="#777f90"/><path d="M4 5l5 5-5 5M11 15h6" stroke="#39425a" stroke-width="2" fill="none"/></svg><svg class="dn" viewBox="0 0 10 8"><path d="M1 1h8L5 6z" fill="#556"/></svg></button>
    <input type="text" placeholder="键入命令" aria-label="键入命令"><button class="up" aria-label="命令历史"><svg viewBox="0 0 10 8"><path d="M5 1l5 6H0z" fill="#222"/></svg></button>
  </div>

  <aside class="net"><div class="rates"><p><svg viewBox="0 0 10 12"><path d="M5 12V2M1 5l4-4 4 4" stroke="#3fa0ec" stroke-width="2" fill="none"/></svg><b>0.1</b>K/s</p><p><svg viewBox="0 0 10 12"><path d="M5 0v10M1 7l4 4 4-4" stroke="#2faa3c" stroke-width="2" fill="none"/></svg><b>0.1</b>K/s</p></div>
    <div class="ring"><svg viewBox="0 0 90 90"><defs><linearGradient id="rg" x1="0" y1="0" x2="0" y2="1"><stop offset="0" stop-color="#3cb6c0"/><stop offset="1" stop-color="#b8ba48"/></linearGradient></defs><circle cx="45" cy="45" r="44" fill="#3b404d" stroke="#232833" stroke-width="2"/><path d="M45 7a38 38 0 1 1-11 74" fill="none" stroke="url(#rg)" stroke-width="3"/></svg><span>55<small>%</small></span></div></aside>

  <aside class="ime"><svg class="s" viewBox="0 0 44 44"><path d="M1 8L36 0l8 34-34 10z" fill="#f4641f"/><path d="M31 13q-9-5-15-1t0 8l11 3q6 4 0 8t-16 1" fill="none" stroke="#fff" stroke-width="7"/></svg>
    <b>中</b><b>°,</b>
    <svg viewBox="0 0 24 24"><circle cx="12" cy="12" r="10" fill="none" stroke="#1c6ec4" stroke-width="2.500"/><path d="M8 7v4M16 7v4M6 13q6 8 12 0" stroke="#1c6ec4" stroke-width="2.500" fill="none"/></svg>
    <svg viewBox="0 0 24 24"><rect x="8" y="1" width="8" height="14" rx="4" fill="#1c6ec4"/><path d="M5 10q0 8 7 8t7-8M12 18v5M7 23h10" stroke="#1c6ec4" stroke-width="2" fill="none"/></svg>
    <svg viewBox="0 0 24 24"><rect x="1" y="4" width="22" height="17" rx="2" fill="none" stroke="#1c6ec4" stroke-width="2"/><path d="M4 8h16M4 12h16" stroke="#1c6ec4" stroke-width="2.500" stroke-dasharray="2.500 1.500"/><path d="M6 17h12" stroke="#1c6ec4" stroke-width="2.500"/></svg>
    <span class="user"><svg viewBox="0 0 24 24"><circle cx="9" cy="6" r="5" fill="#b8bcc8"/><path d="M1 23v-6q0-5 8-5t8 5v6z" fill="#b8bcc8"/></svg><small>16</small></span>
    <svg viewBox="0 0 24 24"><path d="M7 2q5 4 10 0l6 4-2 6-3-1v12H6V11l-3 1-2-6z" fill="#1c6ec4"/></svg>
    <svg viewBox="0 0 24 24"><path d="M2 2h9v9H2zM2 13h9v9H2zM13 13h9v9h-9z" fill="#1c6ec4"/><path d="M14 3h7v7h-7z" fill="none" stroke="#1c6ec4" stroke-width="2"/></svg>
  </aside>
</main>

<nav class="layouts"><a class="on" href="#">模型</a><a href="#">布局1</a><a href="#">布局2</a><button aria-label="新布局"><svg viewBox="0 0 12 12"><path d="M6 0v12M0 6h12" stroke="#ccc" stroke-width="3"/></svg></button></nav>

<footer class="status">
  <output>82.9315, 161.5578, 0.0000</output><button class="model">模型</button>
  <button class="on" aria-label="栅格"><svg viewBox="0 0 24 24"><path d="M6 1v22M12 1v22M18 1v22M1 6h22M1 12h22M1 18h22" stroke="#fff" stroke-width="1.500"/></svg></button>
  <button aria-label="捕捉"><svg viewBox="0 0 24 24"><path d="M3 4h18M3 12h18M3 20h18" stroke="#ddd" stroke-width="3" stroke-dasharray="3 4.500"/></svg></button><button class="a" aria-label="捕捉设置"><svg><use href="#dn"/></svg></button><i></i>
  <button aria-label="推断约束"><svg viewBox="0 0 24 24"><path d="M1 14h11v9H1z" fill="#ddd"/><path d="M13 1h10v9H13v9" fill="none" stroke="#ddd"/></svg></button><i></i>
  <button class="on" aria-label="动态输入"><svg viewBox="0 0 24 24"><path d="M7 2v12M1 8h12" stroke="#fff" stroke-width="1.500"/><path d="M9 15h15v7H9z" fill="#fff"/><path d="M11 16v5" stroke="#57a"/></svg></button>
  <button aria-label="正交"><svg viewBox="0 0 24 24"><path d="M1 1v22h22M1 16h7v7" fill="none" stroke="#ddd" stroke-width="1.500"/></svg></button>
  <button class="on" aria-label="极轴"><svg viewBox="0 0 24 24"><circle cx="10" cy="13" r="9" fill="none" stroke="#fff"/><path d="M10 13h14M10 13L21 1" stroke="#fff"/></svg></button><button class="a" aria-label="极轴设置"><svg><use href="#dn"/></svg></button>
  <button aria-label="等轴测"><svg viewBox="0 0 24 24"><path d="M12 0v24" stroke="#5fc08a"/><path d="M3 2l17 21" stroke="#c05050"/><path d="M10 10h4v4h-4z" fill="#444" stroke="#fff"/></svg></button><button class="a" aria-label="等轴测设置"><svg><use href="#dn"/></svg></button><i></i>
  <button class="on" aria-label="对象追踪"><svg viewBox="0 0 24 24"><path d="M23 1L2 22h21" fill="none" stroke="#fff"/><path d="M8 12h5v5H8z" fill="#fff"/></svg></button>
  <button class="on" aria-label="对象捕捉"><svg viewBox="0 0 24 24"><path d="M4 4h18v19H4z" fill="none" stroke="#fff"/><path d="M1 1h6v6H1z" fill="#6090c8" stroke="#fff"/></svg></button><button class="a" aria-label="对象捕捉设置"><svg><use href="#dn"/></svg></button><i></i>
  <button aria-label="线宽"><svg viewBox="0 0 24 24"><path d="M0 4h24" stroke="#ddd"/><path d="M0 8h12M0 14h12M0 20h12" stroke="#ddd" stroke-width="3"/><path d="M12 8h12M12 14h12M12 20h12" stroke="#ddd" stroke-width="1.500"/></svg></button>
  <button class="on" aria-label="透明度"><svg viewBox="0 0 24 24"><path d="M1 1h22v22H1z" fill="none" stroke="#fff"/><path d="M2 4h20M2 12h20M2 20h20" stroke="#fff" stroke-width="4" stroke-dasharray="4 4"/><path d="M6 8h16M6 16h16" stroke="#fff" stroke-width="4" stroke-dasharray="4 4"/></svg></button>
  <button aria-label="选择循环"><svg viewBox="0 0 24 24"><path d="M4 0v8M0 4h8M5 18V7h13" stroke="#bbb" fill="none"/><path d="M8 9h15v14H8z" fill="#7fcf9c"/></svg></button><i></i>
  <button class="on" aria-label="三维对象捕捉"><svg viewBox="0 0 24 24"><path d="M5 7h12v12H5zM5 7l6-6h12l-6 6M23 1v12l-6 6" fill="none" stroke="#fff"/><path d="M1 17h6v6H1z" fill="#6090c8" stroke="#fff"/></svg></button><button class="a" aria-label="三维捕捉设置"><svg><use href="#dn"/></svg></button><i></i>
  <button class="on" aria-label="动态 UCS"><svg viewBox="0 0 24 24"><path d="M4 3v18h17" fill="none" stroke="#fff" stroke-width="1.500"/><path d="M1 5l3-5 3 5zM19 18l5 3-5 3zM14 4l-5 9h4l-2 7 7-10h-4z" fill="#fff"/></svg></button>
  <button aria-label="选择过滤"><svg viewBox="0 0 24 24"><path d="M4 5h13v16H4zM4 5l4-4h15v16l-5 4M17 5l6-4" fill="none" stroke="#ddd" stroke-dasharray="4 2"/><path d="M1 3h5v5H1zM15 3h5v5h-5zM1 18h5v5H1zM15 18h5v5h-5z" fill="#83c5fb"/></svg></button><button class="a" aria-label="过滤设置"><svg><use href="#dn"/></svg></button>
  <button class="on" aria-label="小控件"><svg viewBox="0 0 24 24"><path d="M3 19V8l9-6 9 6v11l-9 4zM12 3v11l-9 6M12 14l9 6" fill="none" stroke="#fff"/><circle cx="12" cy="13" r="4" fill="none" stroke="#fff"/></svg></button><button class="a" aria-label="小控件设置"><svg><use href="#dn"/></svg></button><i></i>
  <button class="on" aria-label="注释可见性"><svg viewBox="0 0 24 24"><path d="M9 1l3 13 6 9-8-4-8 4 5-9z" fill="#fff"/><circle cx="18" cy="5" r="4" fill="none" stroke="#fff"/></svg></button>
  <button aria-label="自动缩放"><svg viewBox="0 0 24 24"><path d="M9 3l3 11 6 9-8-4-8 4 5-9zM20 0l-7 8h4l-3 7 8-9h-4z" fill="#ddd"/></svg></button>
  <button aria-label="注释比例"><svg viewBox="0 0 24 24"><path d="M12 2l3 12 6 9-9-4-9 4 6-9z" fill="#ddd"/></svg></button>
  <button class="ratio">1:1<svg><use href="#dn"/></svg></button><i></i>
  <button aria-label="切换工作空间"><svg viewBox="0 0 24 24"><circle cx="12" cy="12" r="6" fill="none" stroke="#ddd" stroke-width="5"/><circle cx="12" cy="12" r="10" fill="none" stroke="#ddd" stroke-width="4" stroke-dasharray="4 3.850"/></svg></button><button class="a" aria-label="工作空间列表"><svg><use href="#dn"/></svg></button><i></i>
  <button aria-label="注释监视器"><svg viewBox="0 0 24 24"><path d="M12 1v22M1 12h22" stroke="#ddd" stroke-width="3"/></svg></button><i></i>
  <label class="unit"><svg viewBox="0 0 24 24"><path d="M6 1h12v2h-6v3h4v2h-4v3h4v2h-4v3h4v2h-4v3h6v2H6z" fill="#ddd"/></svg><select aria-label="单位"><option>小数</option></select><svg class="ft"><use href="#dn"/></svg></label><i></i>
  <button aria-label="快捷特性"><svg viewBox="0 0 24 24"><path d="M3 1h18v22H3zM3 5h18" fill="none" stroke="#ddd" stroke-width="1.500"/><path d="M6 9h3v3H6zM6 15h3v3H6zM11 10h8M11 17h8" stroke="#ddd" fill="none"/></svg></button><i></i>
  <button aria-label="锁定用户界面"><svg viewBox="0 0 24 24"><path d="M12 18H1V2h20v8" fill="none" stroke="#ddd"/><path d="M1 2h20v3H1zM11 14h10v9H11z" fill="#ddd"/><path d="M18 14v-4h5v4" fill="none" stroke="#ddd" stroke-width="2"/></svg></button><button class="a" aria-label="锁定选项"><svg><use href="#dn"/></svg></button><i></i>
  <button aria-label="隔离对象"><svg viewBox="0 0 24 24"><path d="M1 1h8v9H1zM9 15l5 8H4z" fill="none" stroke="#ddd"/><circle cx="18" cy="10" r="5" fill="none" stroke="#ddd"/></svg></button><i></i>
  <button class="on" aria-label="图形性能"><svg viewBox="0 0 24 24"><circle cx="12" cy="12" r="11" fill="#8fb4de" stroke="#fff"/><path d="M11 15l7-9" stroke="#fff" stroke-width="2"/></svg></button><i></i><i></i>
  <button aria-label="全屏显示"><svg viewBox="0 0 24 24"><path d="M1 4h22v16H1z" fill="none" stroke="#ddd" stroke-width="1.500"/><path d="M14 7h6v5zM4 12l6 5H4zM13 12l5-5M11 12l-5 5" fill="#ddd" stroke="#ddd"/></svg></button>
  <button aria-label="自定义"><svg viewBox="0 0 24 24"><path d="M0 3h24M0 12h24M0 21h24" stroke="#ddd" stroke-width="3"/></svg></button>
</footer>
</div>
</body>
</html>
```
FILE: styles.css
```css
* { box-sizing: border-box; }
body {
  margin: 0;
  padding: 8px 8px 9px;
  background: #f4f4f4;
  color: #f0f0f0;
  font: 18px/24px "Open Sans", "Noto Sans CJK SC", sans-serif;
}
button, select, input { font: inherit; color: inherit; }
button { border: 0; padding: 0; background: none; display: flex; align-items: center; justify-content: center; }
a { color: inherit; text-decoration: none; }
h1, h2, p { margin: 0; font-weight: 400; font-size: 18px; }
svg { display: block; flex: none; }
.sprite { position: absolute; width: 0; height: 0; }
.dn { width: 10px; height: 8px; }
.ft { width: 16px; height: 12px; }
.i, .qat svg { width: 24px; height: 24px; }
.qat .dn { width: 10px; height: 8px; }
.cust, .qat .cust { width: 13px; height: 13px; }

.app {
  display: flex;
  flex-direction: column;
  min-height: calc(100vh - 17px);
  background: #383838;
  box-shadow: 0 0 4px 3px #a4a4a6;
}

/* title and menu */
.top { display: flex; background: linear-gradient(#a2a2a2, #8a8a8a 33px, #222 34px, #a0a0a0 35px, #565656 64px, #2e2e2e 65px); }
.logo { width: 58px; height: 58px; gap: 3px; padding-bottom: 12px; background: linear-gradient(#d0d0d0, #6c6c6c); border: solid #000; border-width: 0 2px 2px 0; }
.toprows { flex: 1; min-width: 0; }
.titlebar { display: flex; height: 34px; }
.qat { display: flex; padding-left: 8px; width: 395px; }
.qat button { width: 36px; color: #eee; }
.qat .nar { width: 18px; flex: 1; }
.qat .dim-btn { color: #b0b0b0; }
.title { position: relative; width: 553px; padding-left: 95px; background: #fff; color: #000; line-height: 34px; font-size: 19px; white-space: nowrap; }
.notice { position: absolute; left: 312px; top: 0; z-index: 2; width: 390px; height: 24px; line-height: 24px; background: #4b4b4b; color: #e4e4e4; font-weight: 700; font-size: 19px; text-align: center; }
.search { flex: 1; min-width: 0; margin: 0 0 1px 22px; padding: 0 0 4px 124px; border: 2px solid #333; background: #6f6f6f; height: 33px; }
.search::placeholder { color: #ccc; opacity: 1; }
.account { display: flex; width: 356px; padding-left: 2px; }
.account button { width: 36px; }
.account .login { width: 78px; gap: 6px; }
.account .nar { width: 26px; }
.account .login + .nar { width: 110px; justify-content: flex-end; padding-right: 10px; }
.account .more { flex: 1; margin-left: 8px; padding-right: 4px; border-left: 1px solid #999; }
.winbtns { display: flex; width: 267px; background: #fff; padding-left: 53px; }
.winbtns button { flex: 1; }
.menu { display: flex; gap: 32px; padding: 3px 0 5px 18px; }
.menu a { white-space: nowrap; }

/* ribbon */
.tabs { display: flex; height: 31px; padding: 3px 0 0 7px; background: linear-gradient(#5e5e5e, #4f4f4f); border-bottom: 2px solid #2c2c2c; color: #ccc; }
.tabs a { padding: 0 15px; white-space: nowrap; }
.tabs .on { margin-right: 3px; background: linear-gradient(#6a6a6a, #5c5c5c); box-shadow: 0 0 0 1px #333; color: #fff; }
.tabs button { margin-left: 34px; padding-bottom: 4px; }
.ribbon { display: flex; height: 146px; background: linear-gradient(#585858, #3a3a3a); border-bottom: 1px solid #222; }
.panel { display: flex; flex-direction: column; background: #5c5c5c; border-right: 3px solid #3c3c3c; }
.panel:first-child { margin-left: 1px; }
.body { display: flex; height: 117px; padding-top: 5px; }
.panel footer { display: flex; flex: 1; align-items: center; justify-content: center; gap: 7px; position: relative; background: linear-gradient(#545454, #505050); border: solid #484848; border-width: 1px 0 0 1px; }
.ln { width: 12px; height: 12px; }
.p2 footer, .p7 footer { padding-right: 16px; }
.p2 footer .ln, .p7 footer .ln { position: absolute; right: 2px; }
.p6 footer, .p10 footer { justify-content: space-between; padding: 0 3px 0 7px; }
.p1 { width: 203px; } .p2 { width: 102px; } .p3 { width: 142px; } .p4 { width: 143px; } .p5 { width: 217px; }
.p6 { width: 92px; } .p7 { width: 219px; } .p8 { width: 158px; } .p9 { width: 256px; } .p10 { width: 93px; border-right: 0; border-left: 3px solid #3c3c3c; }
.grid { display: grid; grid-auto-rows: 36px; align-content: start; }
.grid button svg { width: 24px; height: 24px; }
.grid .d svg { width: 11px; height: 8px; }
.p1 .grid { grid-template-columns: 32px; }
.p1 .body { padding-left: 8px; }
.p2 .grid { grid-template-columns: 28px; }
.p3 .grid { grid-template-columns: 40px 42px 34px 18px; padding-left: 3px; }
.p4 .grid { grid-template-columns: 36px 36px 46px 10px; padding-left: 5px; }
.p5 .grid { grid-template-columns: 40px 42px 36px 44px 32px 16px; }
.p7 .grid { grid-template-columns: 32px 14px 56px 28px 44px 31px; padding-left: 8px; }
.p8 .grid { grid-template-columns: 36px 14px; }
.big { flex-direction: column; justify-content: flex-start; height: 107px; padding: 5px 0 0; }
.big > svg:first-child { width: 48px; height: 48px; margin-bottom: 5px; }
.big .dn { margin-top: 2px; }
.p1 .big { width: 78px; } .p2 .big { width: 65px; } .p6 .big, .p10 .big { flex: 1; }
.p9 .body { padding-left: 2px; gap: 4px; }
.p9 .big { width: 98px; }
.p9 .big.on { width: 56px; border: 1px solid #26375c; background: linear-gradient(#5f86c8, #4a6798); }
.p9 .side { position: relative; width: 86px; }
.side .dn { position: absolute; right: 2px; bottom: 20px; }
.combo { position: relative; display: flex; align-items: center; gap: 3px; height: 33px; padding: 0 1px 0 3px; border: 1px solid #2e2e2e; background: linear-gradient(#4c4c4c, #686868); }
.combo.hot { background: linear-gradient(#8a8a8a, #686868); }
.combo > svg:first-child { width: 24px; height: 24px; }
.combo select, .unit select { flex: 1; min-width: 0; border: 0; background: none; appearance: none; }
.p7 .combo { grid-column: 3 / -1; width: 149px; justify-self: end; align-self: center; }
.col { flex-direction: column; gap: 3px; padding: 7px 3px 0; }
.col .grid { grid-auto-rows: 33px; }
.cursor { position: absolute; left: 101px; top: 19px; width: 18px; height: 27px; z-index: 3; }
.fold { width: 88px; margin: 1px 2px 1px 1px; padding: 7px 0 4px; border: 1px solid #3a3a3a; background: linear-gradient(#686868, #484848); justify-content: flex-start; }
.fold svg:first-child { width: 48px; height: 48px; margin-bottom: 5px; }
.fold.small svg:first-child { width: 24px; height: 24px; }
.fold .ft { margin-top: auto; }

/* drawing tabs */
.files { display: flex; height: 47px; padding: 5px 0 0 21px; border-top: 2px solid #8a8a8a; border-bottom: 10px solid #555; background: #363636; color: #b0b0b0; }
.files a { display: flex; justify-content: space-between; align-items: center; width: 192px; height: 30px; padding: 0 17px 0 25px; background: linear-gradient(#565656, #484848); clip-path: polygon(4% 100%, 9% 12%, 12% 0, 95% 0, 98% 12%, 100% 100%); }
.files .on { margin-left: -2px; padding: 0 22px 0 20px; background: linear-gradient(#6e6e6e, #565656); color: #fff; clip-path: polygon(0 100%, 5% 12%, 8% 0, 93% 0, 96% 12%, 100% 100%); }
.files a svg { width: 12px; height: 12px; color: #333; }
.files button, .layouts button { width: 33px; height: 26px; margin: 3px 0 0 6px; background: #505050; border-radius: 6px 12px 4px 12px; }
.files button svg, .layouts button svg { width: 12px; height: 12px; }

/* document windows */
.docs { position: relative; display: flex; gap: 2px; flex: 1; background: #222; border-bottom: 2px solid #eee; overflow: hidden; }
.doc { flex: 1; min-width: 0; display: flex; flex-direction: column; padding: 0 10px 10px 11px; background: linear-gradient(#c0cfe2, #d6e2f2 44px, #d8e2f0); border-radius: 6px 6px 0 0; }
.doc.active { background: linear-gradient(#98b2d6, #bcd2ec 44px, #b8cfe8); }
.doc header { display: flex; align-items: center; height: 44px; padding: 7px 2px 0 3px; gap: 2px; }
.doc header > svg { width: 22px; height: 24px; }
.doc h2 { flex: 1; margin-left: 3px; color: #8c949e; }
.active h2 { color: #111; }
.doc header button { width: 50px; height: 29px; border: 1px solid #7f93ad; border-radius: 2px; background: linear-gradient(#cbd8e8 50%, #bccbe0 50%); }
.doc header button svg { width: 22px; height: 22px; }
.doc header .close { background: linear-gradient(#e49a88 45%, #c8432a 46%, #cc6248); border-color: #7a2a20; }
.canvas { position: relative; flex: 1; min-height: 560px; background: #212733; overflow: hidden; }
.draw { position: absolute; left: 0; top: 0; width: 100%; height: auto; }
.dim text { font: 10px "Liberation Mono", monospace; fill: #222; }
.vplabel { position: absolute; left: 4px; top: 5px; color: #fff; }
.cube { position: absolute; right: 0; top: 0; width: 137px; height: 136px; }
.cube text { text-anchor: middle; font-family: "Noto Sans CJK SC", sans-serif; }
.ucs { position: absolute; right: 38px; top: 147px; width: 70px; height: 26px; gap: 8px; border: 1px solid #8a8e98; border-radius: 5px; background: #b9bcc8; color: #3c424e; font-size: 15px; font-family: "Liberation Sans", sans-serif; }
.ucs svg { width: 12px; height: 8px; }
.second { right: 31px; width: 84px; background: #888b92; color: #444; font-family: "Noto Sans CJK SC", sans-serif; }
.nav { position: absolute; right: 3px; top: 206px; width: 46px; height: 311px; }
.wm { position: absolute; left: 813px; top: -15px; width: 400px; height: 400px; overflow: visible; pointer-events: none; }
.wm text { font: 66px "Noto Sans CJK SC", sans-serif; fill: #fff; fill-opacity: .07; stroke: #fff; stroke-opacity: .07; }

/* command line */
.history { position: absolute; left: 479px; bottom: 41px; display: flex; flex-direction: column; align-items: flex-start; gap: 7px; }
.history p { height: 24px; padding: 0 4px; border-radius: 3px; background: rgba(110, 110, 110, .82); font-size: 21px; line-height: 24px; white-space: pre; }
.history kbd { font: 17px "Liberation Mono", monospace; }
.cmd { position: absolute; left: 388px; right: 389px; bottom: 0; height: 37px; display: flex; border-radius: 4px 4px 0 0; background: rgba(240, 240, 245, .76); overflow: hidden; }
.grip { display: flex; align-items: center; gap: 18px; width: 81px; padding: 0 8px 0 10px; background: #626470; }
.grip i { border-left: 2px dotted #999; height: 26px; margin-right: -8px; }
.grip svg { width: 14px; height: 14px; }
.grip button:last-child svg { width: 20px; height: 20px; }
.prompt { gap: 5px; padding: 0 8px 0 6px; }
.prompt svg:first-child { width: 22px; height: 20px; }
.cmd input { flex: 1; min-width: 0; border: 0; padding: 0 4px; background: none; color: #222; font-style: italic; font-size: 20px; }
.cmd input::placeholder { color: #777; opacity: 1; }
.up { width: 22px; }
.up svg { width: 11px; height: 8px; }

/* floating desktop gadgets */
.net { position: absolute; right: 0; top: 248px; display: flex; align-items: center; width: 178px; height: 90px; }
.rates { width: 110px; height: 62px; padding-left: 14px; border-radius: 30px 0 0 30px; background: #1a1e28; color: #888; }
.rates p { display: flex; align-items: center; font-size: 14px; line-height: 31px; }
.rates b { margin: 0 2px 0 8px; color: #ccc; font-size: 16px; }
.rates svg { width: 10px; height: 12px; }
.ring { position: absolute; right: 1px; top: 0; width: 90px; height: 90px; }
.ring span { position: absolute; left: 18px; top: 24px; font-size: 33px; line-height: 40px; color: #ddd; }
.ring small { font-size: 16px; }
.ime { position: absolute; right: 45px; bottom: 62px; display: flex; align-items: center; justify-content: space-between; width: 293px; height: 37px; padding: 0 7px 0 32px; background: #fff; color: #1c6ec4; }
.ime svg { width: 23px; height: 23px; }
.ime b { width: 23px; text-align: center; font-size: 21px; }
.ime .s { position: absolute; left: -18px; top: -4px; width: 44px; height: 44px; }
.user { position: relative; }
.user small { position: absolute; left: 9px; top: 10px; font-size: 13px; line-height: 14px; font-weight: 700; color: #9aa0ac; background: #fff; }

/* layout tabs and status bar */
.layouts { display: flex; height: 32px; padding: 2px 0 0 17px; background: #383838; color: #a8a8a8; }
.layouts a { height: 27px; line-height: 26px; padding: 0 17px 0 16px; margin-right: -5px; background: #4c4c4c; clip-path: polygon(0 0, 100% 0, 92% 70%, 86% 100%, 14% 100%, 8% 70%); }
.layouts a + a { padding: 0 21px; }
.layouts .on { background: linear-gradient(#4c4c4c, #747474); color: #fff; font-weight: 700; z-index: 1; }
.layouts button { margin: 0 0 0 10px; border-radius: 12px 4px 12px 6px; }
.status { display: flex; justify-content: flex-end; gap: 1px; height: 40px; padding-right: 2px; background: linear-gradient(90deg, #383838 201px, #4c4c4c 201px); border-bottom: 1px solid #111; }
.status > * { flex: none; border-top: 4px solid #6c6c6c; }
.status output { width: 230px; padding-right: 6px; border: solid #6c6c6c; border-width: 3px 2px 0; text-align: right; line-height: 34px; font-size: 16px; font-weight: 600; color: #fff; white-space: nowrap; }
.status .model { width: 44px; border: solid #6c6c6c; border-width: 3px 2px 0; font-weight: 700; margin-right: 4px; }
.status button { width: 35px; }
.status button svg { width: 24px; height: 24px; }
.status .on { background: #5f8fca; }
.status .a { width: 20px; }
.status .a svg, .status .ratio svg { width: 13px; height: 10px; }
.status i { width: 4px; border-left: 2px solid #6c6c6c; }
.status .ratio { width: 50px; gap: 3px; }
.unit { display: flex; align-items: center; width: 143px; padding: 0 3px; }
.unit svg:first-child { width: 24px; height: 24px; }
.unit select { margin-left: 12px; font-weight: 600; }
.unit .ft { width: 13px; height: 10px; }
```
